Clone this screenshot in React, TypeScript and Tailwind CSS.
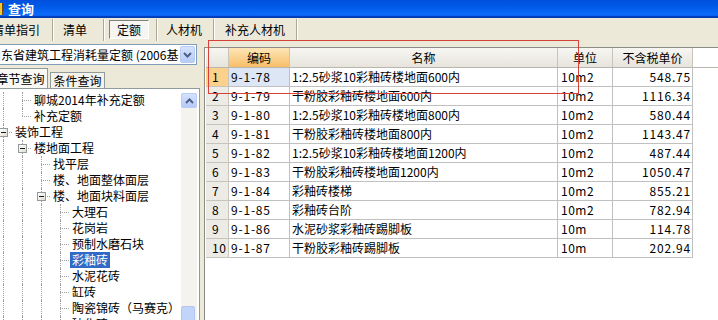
import React from "react";

type Guide = "line" | "tee" | "ell";

const treeRows: { g: Guide[]; box?: boolean; label: string; sel?: boolean }[] = [
  { g: ["line", "tee"], label: "聊城2014年补充定额" },
  { g: ["line", "ell"], label: "补充定额" },
  { g: ["tee"], box: true, label: "装饰工程" },
  { g: ["line", "tee"], box: true, label: "楼地面工程" },
  { g: ["line", "line", "tee"], label: "找平层" },
  { g: ["line", "line", "tee"], label: "楼、地面整体面层" },
  { g: ["line", "line", "tee"], box: true, label: "楼、地面块料面层" },
  { g: ["line", "line", "line", "tee"], label: "大理石" },
  { g: ["line", "line", "line", "tee"], label: "花岗岩" },
  { g: ["line", "line", "line", "tee"], label: "预制水磨石块" },
  { g: ["line", "line", "line", "tee"], label: "彩釉砖", sel: true },
  { g: ["line", "line", "line", "tee"], label: "水泥花砖" },
  { g: ["line", "line", "line", "tee"], label: "缸砖" },
  { g: ["line", "line", "line", "tee"], label: "陶瓷锦砖（马赛克）" },
  { g: ["line", "line", "line", "tee"], label: "玻化砖" },
];

const rows = [
  ["9-1-78", "1:2.5砂浆10彩釉砖楼地面600内", "10m2", "548.75"],
  ["9-1-79", "干粉胶彩釉砖楼地面600内", "10m2", "1116.34"],
  ["9-1-80", "1:2.5砂浆10彩釉砖楼地面800内", "10m2", "580.44"],
  ["9-1-81", "干粉胶彩釉砖楼地面800内", "10m2", "1143.47"],
  ["9-1-82", "1:2.5砂浆10彩釉砖楼地面1200内", "10m2", "487.44"],
  ["9-1-83", "干粉胶彩釉砖楼地面1200内", "10m2", "1050.47"],
  ["9-1-84", "彩釉砖楼梯", "10m2", "855.21"],
  ["9-1-85", "彩釉砖台阶", "10m2", "782.94"],
  ["9-1-86", "水泥砂浆彩釉砖踢脚板", "10m", "114.78"],
  ["9-1-87", "干粉胶彩釉砖踢脚板", "10m", "202.94"],
];

function Sep() {
  return <div className="my-[1px] w-[2px] shrink-0 border-l border-r border-l-[#aca899] border-r-white" />;
}

function Chevron({ up }: { up?: boolean }) {
  return (
    <svg width="9" height="6" viewBox="0 0 9 6">
      <polyline
        points={up ? "1,5 4.5,1.5 8,5" : "1,1 4.5,4.5 8,1"}
        fill="none"
        stroke="#4d6185"
        strokeWidth="2"
      />
    </svg>
  );
}

function GuideCell({ type, box }: { type: Guide; box?: boolean }) {
  return (
    <div className="relative h-[16px] w-[19px] shrink-0">
      <div
        className={
          type === "ell"
            ? "absolute left-[10px] top-0 h-[8px] border-l border-dotted border-[#a0a0a0]"
            : "absolute bottom-0 left-[10px] top-0 border-l border-dotted border-[#a0a0a0]"
        }
      />
      {type !== "line" && (
        <div className="absolute left-[10px] top-[8px] w-[9px] border-t border-dotted border-[#a0a0a0]" />
      )}
      {box && (
        <div className="absolute left-[6px] top-[4px] flex h-[9px] w-[9px] items-center justify-center border border-[#919b9c] bg-[linear-gradient(135deg,#ffffff,#e0ddd2)]">
          <div className="h-px w-[5px] bg-[#1a1a1a]" />
        </div>
      )}
    </div>
  );
}

export default function App() {
  return (
    <div className="relative h-[320px] w-[718px] overflow-hidden bg-[#ece9d8] font-['Noto_Sans_CJK_SC',sans-serif] text-[12px] text-black">
      {/* title bar */}
      <div className="flex h-[18px] items-center bg-[linear-gradient(to_bottom,#0050dc_0%,#0058e6_35%,#0a68f6_70%,#0b6af7_85%,#003cc0_92%,#003aa6_100%)]">
        <div className="h-[12px] w-[3px] border-r border-[#6b4a00] bg-[#f4c640]" />
        <span className="ml-[5px] text-[13px] font-bold leading-[16px] text-white">查询</span>
      </div>

      {/* main tabs */}
      <div className="flex h-[24px] items-stretch leading-[24px]">
        <div className="-ml-[8px] w-[60px] shrink-0 whitespace-nowrap">清单指引</div>
        <Sep />
        <div className="w-[49px] shrink-0 pl-[9px]">清单</div>
        <Sep />
        <div className="w-[51px] shrink-0 pl-[4px] pt-[2px]">
          <div className="flex h-[19px] w-[40px] items-center justify-center border border-b-white border-l-[#808080] border-r-white border-t-[#808080] bg-[#f6f5ef] leading-[17px]">
            定额
          </div>
        </div>
        <Sep />
        <div className="w-[55px] shrink-0 pl-[8px]">人材机</div>
        <Sep />
        <div className="w-[81px] shrink-0 pl-[10px]">补充人材机</div>
        <Sep />
      </div>

      {/* body */}
      <div className="flex h-[278px]">
        {/* left panel */}
        <div className="flex w-[200px] shrink-0 flex-col">
          <div className="-ml-[14px] mt-[2px] flex h-[21px] w-[211px] shrink-0 border border-[#7f9db9] bg-white">
            <div className="flex-1 overflow-hidden whitespace-nowrap pl-[2px] leading-[19px]">
              山东省建筑工程消耗量定额 (2006基价)
            </div>
            <div className="m-px flex h-[17px] w-[15px] items-center justify-center rounded-[2px] border border-[#b7cbf5] bg-[linear-gradient(to_bottom,#d5e2fd,#b6cbf7)]">
              <Chevron />
            </div>
          </div>

          <div className="flex h-[23px] shrink-0 items-end">
            <div className="-ml-[9px] flex h-[20px] w-[57px] items-center justify-center border-l border-r border-t border-[#919b9c] bg-[#f8f8f4] pl-[2px] text-[12px]">
              章节查询
            </div>
            <div className="ml-[2px] flex h-[16px] w-[55px] items-center justify-center border-l border-r border-t border-[#919b9c] bg-[#f3f2ec]">
              条件查询
            </div>
          </div>

          <div className="flex min-h-0 flex-1 border-r border-t border-[#919b9c] bg-white pr-[2px]">
            <div className="min-w-0 flex-1 overflow-hidden pt-[3px]">
              <div className="-ml-[7px]">
                {treeRows.map((r, i) => (
                  <div key={i} className="flex h-[16px] items-center whitespace-nowrap">
                    {r.g.map((t, j) => (
                      <GuideCell key={j} type={t} box={r.box && j === r.g.length - 1} />
                    ))}
                    {r.sel ? (
                      <span className="ml-px bg-[#316ac5] px-[2px] leading-[16px] text-white">{r.label}</span>
                    ) : (
                      <span className="ml-[3px] leading-[16px]">{r.label}</span>
                    )}
                  </div>
                ))}
              </div>
            </div>
            <div className="mt-[4px] flex w-[16px] shrink-0 flex-col bg-[#f4f3ee]">
              <div className="flex h-[15px] items-center justify-center rounded-[2px] border border-[#b7cbf5] bg-[linear-gradient(to_bottom,#d5e2fd,#b6cbf7)]">
                <Chevron up />
              </div>
              <div className="mt-auto -mb-[6px] h-[20px] w-[14px] rounded-[2px] border border-[#b3c6f2] bg-[#c3d4fb]" />
            </div>
          </div>
        </div>

        {/* splitter */}
        <div className="w-[4px] shrink-0" />

        {/* table panel */}
        <div className="mt-[5px] flex-1 border-l border-t border-[#8d8d88] bg-white pl-px">
          <div className="flex h-[20px] border-b border-[#b9b7ad] leading-[19px]">
            <div className="w-[23px] shrink-0 border-r border-[#c6c4bb] bg-[linear-gradient(to_bottom,#f7f6f2,#e6e4dc)]" />
            <div className="w-[61px] shrink-0 border-r border-[#c6c4bb] bg-[linear-gradient(to_bottom,#fde6b8,#f8be68)] text-center">
              编码
            </div>
            <div className="w-[268px] shrink-0 border-r border-[#c6c4bb] bg-[linear-gradient(to_bottom,#f7f6f2,#e6e4dc)] text-center">
              名称
            </div>
            <div className="w-[55px] shrink-0 border-r border-[#c6c4bb] bg-[linear-gradient(to_bottom,#f7f6f2,#e6e4dc)] text-center">
              单位
            </div>
            <div className="w-[80px] shrink-0 border-r border-[#c6c4bb] bg-[linear-gradient(to_bottom,#f7f6f2,#e6e4dc)] text-center">
              不含税单价
            </div>
          </div>
          {rows.map((r, i) => (
            <div key={i} className="flex h-[19px] leading-[18px]">
              <div
                className={
                  i === 0
                    ? "w-[23px] shrink-0 border-b border-r border-[#c6c4bb] bg-[#fbd18c] pl-[6px] tracking-[0.5px]"
                    : "w-[23px] shrink-0 border-b border-r border-[#c6c4bb] bg-[#ecebe5] pl-[6px] tracking-[0.5px]"
                }
              >
                {i + 1}
              </div>
              <div
                className={
                  i === 0
                    ? "w-[61px] shrink-0 border-b border-r border-[#c0c0c0] bg-[#dce6f4] pl-[2px] tracking-[0.8px]"
                    : "w-[61px] shrink-0 border-b border-r border-[#c0c0c0] pl-[2px] tracking-[0.8px]"
                }
              >
                {r[0]}
              </div>
              <div className="w-[268px] shrink-0 whitespace-nowrap border-b border-r border-[#c0c0c0] pl-[2px]">
                {r[1]}
              </div>
              <div className="w-[55px] shrink-0 border-b border-r border-[#c0c0c0] pl-[3px] tracking-[0.5px]">{r[2]}</div>
              <div className="w-[80px] shrink-0 border-b border-r border-[#c0c0c0] pr-[1px] text-right tracking-[0.8px]">
                {r[3]}
              </div>
            </div>
          ))}
        </div>
      </div>

      {/* red annotation box */}
      <div className="pointer-events-none absolute left-[208px] top-[40px] h-[54px] w-[371px] border border-[#d8403a]" />
    </div>
  );
}
